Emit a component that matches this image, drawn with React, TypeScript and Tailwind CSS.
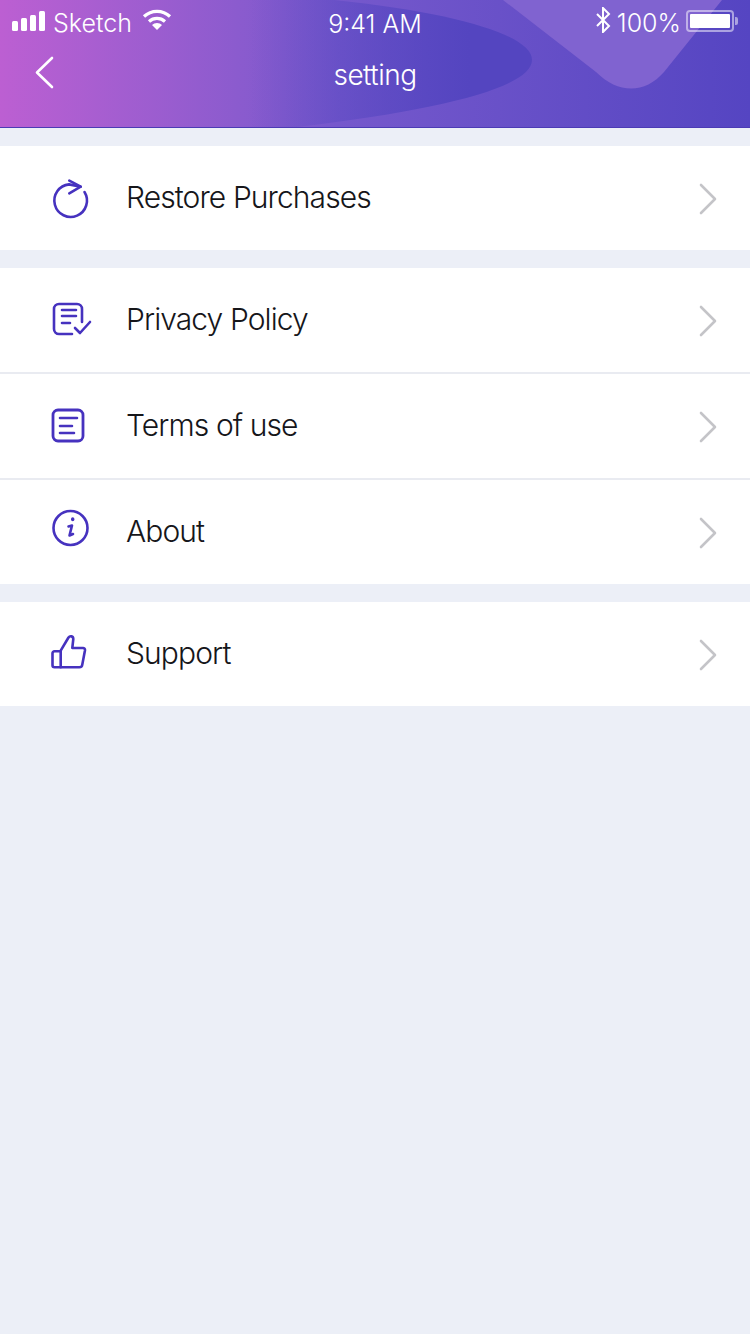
import React from "react";

function Chevron() {
  return (
    <svg width="20" height="32" viewBox="0 0 20 32" fill="none" className="mt-[2px] shrink-0">
      <path d="M3 2l14 14L3 30" stroke="#c4c4c8" strokeWidth="2.6" strokeLinecap="round" strokeLinejoin="round" />
    </svg>
  );
}

function Icon({ children }: { children: React.ReactNode }) {
  return (
    <svg width="40" height="40" viewBox="0 0 40 40" fill="none" stroke="#4632bf" strokeWidth="2.6" strokeLinecap="round" strokeLinejoin="round" className="shrink-0 overflow-visible">
      {children}
    </svg>
  );
}

const RestoreIcon = () => (
  <Icon>
    <path d="M34.500 14A16.300 16.300 0 1 1 19 6.400L30.700 8.700" />
    <path d="M19.300 2.700L30.700 8.700L19.300 15.300" />
  </Icon>
);
const PolicyIcon = () => (
  <Icon>
    <path d="M22 34H9a5 5 0 0 1-5-5V9a5 5 0 0 1 5-5h18a5 5 0 0 1 5 5v13" />
    <path d="M12 10h14M12 16h14M12 23h8" />
    <path d="M25 28l5 5L40 22" />
  </Icon>
);
const TermsIcon = () => (
  <Icon>
    <rect x="3" y="4" width="30" height="31" rx="5" strokeWidth="2.800" />
    <path d="M10 12h17M10 20h12M10 27h14" />
  </Icon>
);
const AboutIcon = () => (
  <Icon>
    <circle cx="20.500" cy="16" r="17" />
    <path d="M18.500 14.500L22 13.500L19.500 23.500L23 22" />
    <path d="M22.700 7v.5" strokeWidth="3.400" />
  </Icon>
);
const SupportIcon = () => (
  <Icon>
    <path d="M4.500 17.300H10.700V33.300H4.500a2 2 0 0 1-2-2V19.300a2 2 0 0 1 2-2z" />
    <path d="M10.700 16.700L18.500 3.500c1.500-2 4.800-1.500 4.800 1.500L22.300 14H33a2 2 0 0 1 2 2.300L32.300 30.500a3 3 0 0 1-3 2.800H10.700" />
  </Icon>
);

function Row({ icon, label, border }: { icon: React.ReactNode; label: string; border?: boolean }) {
  return (
    <div className={`flex items-center bg-white pl-[50px] pr-[32px] ${border ? "h-[106px] border-b-2 border-[#e9ebf1]" : "h-[104px]"}`}>
      {icon}
      <span className="ml-[36px] -mt-[3px] flex-1 text-[30px] leading-none font-light tracking-[-0.9px] text-[#16161a]">{label}</span>
      <Chevron />
    </div>
  );
}

function StatusBar() {
  return (
    <div className="grid h-[40px] grid-cols-[1fr_auto_1fr] items-center px-[12px] text-[25px] font-light text-white">
      <div className="flex items-center">
        <div className="-mt-[2px] flex items-end gap-[3px]">
          <span className="h-[10px] w-[6px] rounded-[1.500px] bg-white" />
          <span className="h-[13px] w-[6px] rounded-[1.500px] bg-white" />
          <span className="h-[16px] w-[6px] rounded-[1.500px] bg-white" />
          <span className="h-[20px] w-[6px] rounded-[1.500px] bg-white" />
        </div>
        <span className="ml-[8px] mt-[3px]">Sketch</span>
        <svg width="30" height="22" viewBox="0 0 30 22" className="ml-[10px] -mt-[4px]" fill="none" stroke="#fff" strokeWidth="3.200">
          <path d="M2 7.500a19 19 0 0 1 26 0" />
          <path d="M7 12.500a12 12 0 0 1 16 0" />
          <path d="M15 21l-5-5a7 7 0 0 1 10 0z" fill="#fff" stroke="none" />
        </svg>
      </div>
      <span className="pt-[6px]">9:41 AM</span>
      <div className="flex items-center justify-end">
        <svg width="16" height="26" viewBox="0 0 16 26" fill="none" stroke="#fff" strokeWidth="2" className="-mt-[4px]">
          <path d="M2 7l12 12-6 6V1l6 6L2 19" />
        </svg>
        <span className="ml-[6px] mt-[3px]">100%</span>
        <div className="ml-[5px] -mt-[1px] h-[22px] w-[48px] rounded-[4px] border-2 border-[#ffffff80] p-[2px]">
          <div className="h-full w-full rounded-[1px] bg-white" />
        </div>
        <span className="ml-[1px] -mt-[1px] h-[8px] w-[3px] rounded-r-[2px] bg-[#ffffff80]" />
      </div>
    </div>
  );
}

export default function App() {
  return (
    <div className="min-h-[1334px] bg-[#eceff7] font-['Inter',Arial,sans-serif]">
      <header className="relative h-[128px] overflow-hidden border-b border-[#4b3bb5] bg-gradient-to-r from-[#bc5fd2] via-[#7658cc] via-45% to-[#5545c2]">
        <svg width="750" height="128" viewBox="0 0 750 128" className="absolute inset-0">
          <defs>
            <linearGradient id="swoosh" x1="250" x2="470" y1="0" y2="0" gradientUnits="userSpaceOnUse">
              <stop offset="0" stopColor="#5445c0" stopOpacity="0" />
              <stop offset="1" stopColor="#5445c0" />
            </linearGradient>
          </defs>
          <path d="M230 -8C420 2 532 30 532 60C532 90 420 116 230 134Z" fill="url(#swoosh)" />
          <path d="M503 0L596 72C618 94 645 94 664 72L722 0Z" fill="#8063d0" />
        </svg>
        <div className="relative">
          <StatusBar />
          <div className="relative flex h-[70px] items-center justify-center text-[28px] font-light tracking-[-0.5px] text-white">
            <svg width="20" height="34" viewBox="0 0 20 34" fill="none" className="absolute left-[35px] top-[16px]">
              <path d="M17 2L2 16.500 17 31" stroke="#fff" strokeWidth="2.600" strokeLinecap="round" strokeLinejoin="round" />
            </svg>
            <span>setting</span>
          </div>
        </div>
      </header>

      <div className="mt-[18px] flex flex-col gap-[18px]">
        <div>
          <Row icon={<RestoreIcon />} label="Restore Purchases" />
        </div>
        <div>
          <Row icon={<PolicyIcon />} label="Privacy Policy" border />
          <Row icon={<TermsIcon />} label="Terms of use" border />
          <Row icon={<AboutIcon />} label="About" />
        </div>
        <div>
          <Row icon={<SupportIcon />} label="Support" />
        </div>
      </div>
    </div>
  );
}
